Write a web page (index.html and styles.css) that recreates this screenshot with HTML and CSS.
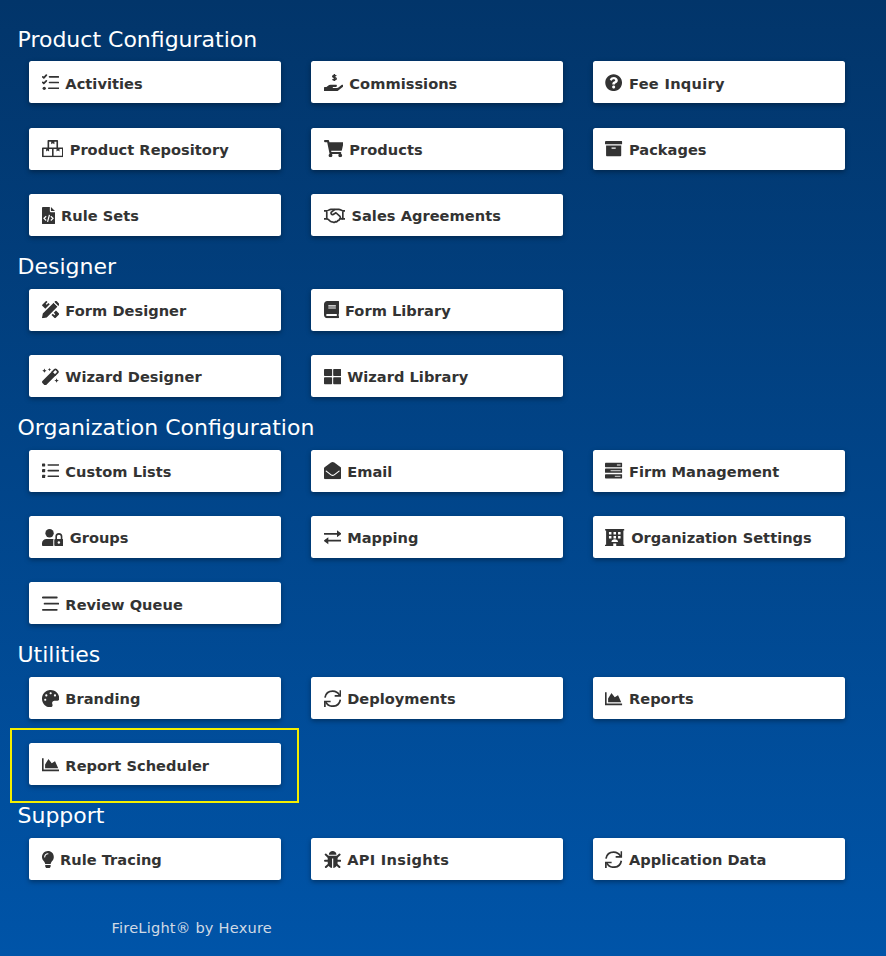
FILE: index.html
```html
<!DOCTYPE html>
<html lang="en">
<head>
<meta charset="utf-8">
<title>FireLight</title>
<link rel="stylesheet" href="styles.css">
</head>
<body>
<svg class="sprite" aria-hidden="true">
<symbol id="tasks" viewBox="0 0 512 512"><g fill="none" stroke="currentColor" stroke-width="52" stroke-linecap="round" stroke-linejoin="round"><path d="M24 84l30 30 74-78M24 250l30 30 74-78"/><path d="M222 84h264M222 252h264M200 422h286" stroke-width="48"/></g><circle cx="66" cy="424" r="48"/></symbol>
<symbol id="hand" viewBox="0 0 576 512"><path d="M565 329c-13-12-34-11-47 0l-92 74c-11 9-25 14-40 14H272c-9 0-16-7-16-16s7-16 16-16h78c16 0 31-11 33-27 3-20-12-37-31-37H192c-27 0-53 9-74 26l-46 38H16c-9 0-16 7-16 16v96c0 9 7 15 16 15h357c14 0 28-5 39-14l152-121c15-12 16-35 1-48z"/><path d="M362 62c-18-20-106-26-106 13 0 40 106 20 106 65 0 42-88 38-110 13M307 0v208" fill="none" stroke="currentColor" stroke-width="44"/></symbol>
<symbol id="question" viewBox="0 0 512 512"><path d="M504 256c0 136.997-111.043 248-248 248S8 392.997 8 256C8 119.083 119.043 8 256 8s248 111.083 248 248zM262.655 90c-54.497 0-89.255 22.957-116.549 63.758-3.536 5.286-2.353 12.415 2.715 16.258l34.699 26.31c5.205 3.947 12.621 3.008 16.665-2.122 17.864-22.658 30.113-35.797 57.303-35.797 20.429 0 45.698 13.148 45.698 32.958 0 14.976-12.363 22.667-32.534 33.976C247.128 238.528 216 254.941 216 296v4c0 6.627 5.373 12 12 12h56c6.627 0 12-5.373 12-12v-1.333c0-28.462 83.186-29.647 83.186-106.667 0-58.002-60.165-102-116.531-102zM256 338c-25.365 0-46 20.635-46 46 0 25.364 20.635 46 46 46s46-20.636 46-46c0-25.365-20.635-46-46-46z"/></symbol>
<symbol id="boxes" viewBox="0 0 640 512"><g fill="none" stroke="currentColor" stroke-width="48" stroke-linejoin="round"><path d="M188 24h264v220H188zM24 244h592v244H24zM320 244v244"/></g><path d="M272 24h96v100l-48-28-48 28zM122 244h88v98l-44-28-44 28zM430 244h88v98l-44-28-44 28z"/></symbol>
<symbol id="cart" viewBox="0 0 576 512"><path d="M528.12 301.319l47.273-208C578.806 78.301 567.391 64 551.99 64H159.208l-9.166-44.81C147.758 8.021 137.93 0 126.529 0H24C10.745 0 0 10.745 0 24v16c0 13.255 10.745 24 24 24h69.883l70.248 343.435C147.325 417.1 136 435.222 136 456c0 30.928 25.072 56 56 56s56-25.072 56-56c0-15.674-6.447-29.835-16.824-40h209.647C430.447 426.165 424 440.326 424 456c0 30.928 25.072 56 56 56s56-25.072 56-56c0-22.172-12.888-41.332-31.579-50.405l5.517-24.276c3.413-15.018-8.002-29.319-23.403-29.319H218.117l-6.545-32h293.145c11.206 0 20.92-7.754 23.403-18.681z"/></symbol>
<symbol id="archive" viewBox="0 0 512 512"><path d="M32 448c0 17.7 14.3 32 32 32h384c17.7 0 32-14.3 32-32V160H32v288zm160-212c0-6.6 5.4-12 12-12h104c6.6 0 12 5.4 12 12v8c0 6.6-5.4 12-12 12H204c-6.6 0-12-5.4-12-12v-8zM480 32H32C14.3 32 0 46.3 0 64v48c0 8.8 7.2 16 16 16h480c8.8 0 16-7.2 16-16V64c0-17.7-14.3-32-32-32z"/></symbol>
<symbol id="filecode" viewBox="0 0 384 512"><path d="M24 0h208v128c0 13 11 24 24 24h128v336c0 13-11 24-24 24H24c-13 0-24-11-24-24V24C0 11 11 0 24 0zM264 0l120 120H264z"/><path d="M124 274l-66 62 66 62M260 274l66 62-66 62M220 234l-56 208" fill="none" stroke="#fff" stroke-width="36"/></symbol>
<symbol id="handshake" viewBox="0 0 640 512"><g fill="none" stroke="currentColor" stroke-width="50" stroke-linejoin="round"><path d="M0 112h82c42 0 74-42 122-42h238c45 0 72 42 116 42h82M82 112v242H0M558 112v242h82"/><path d="M82 354c42 0 60 25 92 54 37 32 58 43 83 35 30 26 62 11 77-9 35 12 64-3 72-31 37 4 49-20 57-49h95M322 72l-112 86c-18 62 49 89 88 47l55-35 121 111c20 22 16 54-11 73"/></g></symbol>
<symbol id="tools" viewBox="0 0 512 512"><path d="M8 112L112 8c9-9 20-9 29 0l22 22-52 52 26 26 52-52 42 42L98 231 8 141c-9-9-9-20 0-29zM414 281l90 90c9 9 9 20 0 29L400 504c-9 9-20 9-29 0l-90-90 40-40 46 46 26-26-46-46zM0 498l24-127L346 49l117 117-322 322L14 512c-8 1-15-6-14-14zM385 11c15-15 39-15 53 0l63 63c15 15 15 39 0 53l-18 18L367 29z"/><path d="M336 39l137 137" stroke="#fff" stroke-width="22"/></symbol>
<symbol id="book" viewBox="0 0 448 512"><path d="M448 360V24c0-13.3-10.7-24-24-24H96C43 0 0 43 0 96v320c0 53 43 96 96 96h328c13.3 0 24-10.7 24-24v-16c0-7.5-3.5-14.3-8.9-18.7-4.2-15.4-4.2-59.3 0-74.7 5.4-4.3 8.9-11.1 8.9-18.6zM128 134c0-3.3 2.7-6 6-6h212c3.3 0 6 2.7 6 6v20c0 3.3-2.7 6-6 6H134c-3.3 0-6-2.7-6-6v-20zm0 64c0-3.3 2.7-6 6-6h212c3.3 0 6 2.7 6 6v20c0 3.3-2.7 6-6 6H134c-3.3 0-6-2.7-6-6v-20zm253.4 250H96c-17.7 0-32-14.3-32-32 0-17.6 14.4-32 32-32h285.4c-1.9 17.1-1.9 46.9 0 64z"/></symbol>
<symbol id="wand" viewBox="0 0 512 512"><path d="M12 387L300 99l113 113-288 288c-15 15-42 15-57 0l-56-56c-16-16-16-41 0-57zM72 16l20 44 44 20-44 20-20 44-20-44L8 80l44-20zM222 0l15 32 32 15-32 15-15 32-15-32-32-15 32-15zM432 304l20 48 48 20-48 20-20 48-20-48-48-20 48-20z"/><path d="M290 134l84-84c15-15 32-15 47 0l41 41c15 15 15 32 0 47l-84 84" fill="none" stroke="currentColor" stroke-width="48"/></symbol>
<symbol id="windows" viewBox="0 0 512 512"><rect y="32" width="240" height="208" rx="22"/><rect x="272" y="32" width="240" height="208" rx="22"/><rect y="272" width="240" height="208" rx="22"/><rect x="272" y="272" width="240" height="208" rx="22"/></symbol>
<symbol id="list" viewBox="0 0 512 512"><rect y="42" width="94" height="94" rx="14"/><rect y="209" width="94" height="94" rx="14"/><rect y="376" width="94" height="94" rx="14"/><path d="M184 88h304M184 256h304M184 424h304" stroke="currentColor" stroke-width="46" stroke-linecap="round"/></symbol>
<symbol id="envelope" viewBox="0 0 512 512"><path d="M0 190c0-16 6-28 18-38L207 18c30-24 68-24 98 0l189 134c12 10 18 22 18 38v274c0 27-21 48-48 48H48c-27 0-48-21-48-48z"/><path d="M66 270l144 110c28 21 64 21 92 0l144-110" fill="none" stroke="#fff" stroke-width="34" stroke-linecap="round"/></symbol>
<symbol id="server" viewBox="0 0 512 512"><rect y="24" width="512" height="128" rx="20"/><rect y="192" width="512" height="128" rx="20"/><rect y="360" width="512" height="128" rx="20"/><path d="M352 88h110M165 256h300M290 424h170" stroke="#b8b8b8" stroke-width="40"/></symbol>
<symbol id="userlock" viewBox="0 0 640 512"><circle cx="224" cy="124" r="124"/><path d="M0 468v-44c0-74 60-128 134-128h180c12 0 22 2 32 5-8 10-12 22-12 37v174H44c-27 0-44-17-44-44zM398 296h200c24 0 42 18 42 42v132c0 24-18 42-42 42H406c-24 0-42-18-42-42V338c0-24 10-42 34-42z"/><path d="M420 300v-76c0-108 160-108 160 0v76" fill="none" stroke="currentColor" stroke-width="48"/><circle cx="500" cy="402" r="36" fill="#fff"/></symbol>
<symbol id="exchange" viewBox="0 0 512 512"><path d="M12 142h448M52 346h448" stroke="currentColor" stroke-width="50" stroke-linecap="round"/><path d="M384 38l122 90c8 8 8 20 0 28l-122 90zM128 242L6 332c-8 8-8 20 0 28l122 90z"/></symbol>
<symbol id="building" viewBox="0 0 576 512"><path fill-rule="evenodd" d="M16 0h544c9 0 16 7 16 16v32h-32v416h32v48H0v-48h32V48H0V16C0 7 7 0 16 0zM116 90v74h74V90zm135 0v74h74V90zm135 0v74h74V90zM116 205v74h74v-74zm135 0v74h74v-74zm135 0v74h74v-74zM190 384h196c0-106-196-106-196 0zM244 430v82h88v-82z"/></symbol>
<symbol id="stream" viewBox="0 0 512 512"><path d="M24 74h414M76 256h412M24 438h414" stroke="currentColor" stroke-width="52" stroke-linecap="round"/></symbol>
<symbol id="palette" viewBox="0 0 512 512"><path d="M204.3 5C104.9 24.4 24.8 104.3 5.2 203.4c-37 187 131.7 326.4 258.8 306.7 41.2-6.4 61.4-54.6 42.5-91.7-23.1-45.4 9.9-98.4 60.9-98.4h79.7c35.8 0 64.8-29.6 64.9-65.3C511.5 97.1 368.1-26.9 204.3 5zM96 320c-17.7 0-32-14.3-32-32s14.3-32 32-32 32 14.3 32 32-14.3 32-32 32zm32-128c-17.7 0-32-14.3-32-32s14.3-32 32-32 32 14.3 32 32-14.3 32-32 32zm128-64c-17.7 0-32-14.3-32-32s14.3-32 32-32 32 14.3 32 32-14.3 32-32 32zm128 64c-17.7 0-32-14.3-32-32s14.3-32 32-32 32 14.3 32 32-14.3 32-32 32z"/></symbol>
<symbol id="sync" viewBox="0 0 512 512"><g fill="none" stroke="currentColor" stroke-width="50"><path d="M28 224C50 104 144 32 256 32c86 0 162 44 204 122M484 288c-22 120-116 192-228 192-86 0-162-44-204-122"/><path d="M486 8v164H316M26 504V340h170"/></g></symbol>
<symbol id="chart" viewBox="0 0 512 512"><path d="M24 64v360h488" fill="none" stroke="currentColor" stroke-width="48"/><path d="M372.7 159.5L288 216l-85.3-113.7c-5.1-6.8-15.5-6.3-19.9 1L92 248v112h388l-89.9-195.8c-3.2-6.5-11.4-8.7-17.4-4.7z"/></symbol>
<symbol id="bulb" viewBox="0 0 352 512"><path d="M96.06 454.35c.01 6.29 1.87 12.45 5.36 17.69l17.09 25.69a31.99 31.99 0 0 0 26.64 14.28h61.71a31.99 31.99 0 0 0 26.64-14.28l17.09-25.69a31.989 31.989 0 0 0 5.36-17.69l.04-38.35H96.01l.05 38.35zM0 176c0 44.37 16.45 84.85 43.56 115.78 16.52 18.85 42.36 58.23 52.21 91.45.04.26.07.52.11.78h160.24c.04-.26.07-.51.11-.78 9.85-33.22 35.69-72.6 52.21-91.45C335.55 260.85 352 220.37 352 176 352 78.61 272.91-.3 175.45 0 73.44.31 0 82.97 0 176zm176-80c-44.11 0-80 35.89-80 80 0 8.84-7.16 16-16 16s-16-7.16-16-16c0-61.76 50.24-112 112-112 8.84 0 16 7.16 16 16s-7.16 16-16 16z"/></symbol>
<symbol id="bug" viewBox="0 0 512 512"><path d="M144 112C144-37 368-37 368 112zM110 144h292v208c0 75-54 138-128 150V224h-36v278c-74-12-128-75-128-150z"/><path d="M50 106l86 76M462 106l-86 76M30 288h90M392 288h90M56 476l84-78M456 476l-84-78" fill="none" stroke="currentColor" stroke-width="60" stroke-linecap="round"/></symbol>
</svg>

<main class="menu">
<section><h2>Product Configuration</h2><div class="grid">
<a class="card"><svg class="icon"><use href="#tasks"/></svg><span>Activities</span></a>
<a class="card"><svg class="icon w576"><use href="#hand"/></svg><span>Commissions</span></a>
<a class="card"><svg class="icon"><use href="#question"/></svg><span class="loose">Fee Inquiry</span></a>
<a class="card"><svg class="icon w640"><use href="#boxes"/></svg><span>Product Repository</span></a>
<a class="card"><svg class="icon w576"><use href="#cart"/></svg><span>Products</span></a>
<a class="card"><svg class="icon"><use href="#archive"/></svg><span>Packages</span></a>
<a class="card"><svg class="icon w384"><use href="#filecode"/></svg><span>Rule Sets</span></a>
<a class="card"><svg class="icon w640"><use href="#handshake"/></svg><span>Sales Agreements</span></a>
</div></section>
<section><h2>Designer</h2><div class="grid two">
<a class="card"><svg class="icon"><use href="#tools"/></svg><span>Form Designer</span></a>
<a class="card"><svg class="icon w448"><use href="#book"/></svg><span>Form Library</span></a>
<a class="card"><svg class="icon"><use href="#wand"/></svg><span>Wizard Designer</span></a>
<a class="card"><svg class="icon"><use href="#windows"/></svg><span>Wizard Library</span></a>
</div></section>
<section><h2>Organization Configuration</h2><div class="grid">
<a class="card"><svg class="icon"><use href="#list"/></svg><span>Custom Lists</span></a>
<a class="card"><svg class="icon"><use href="#envelope"/></svg><span>Email</span></a>
<a class="card"><svg class="icon"><use href="#server"/></svg><span>Firm Management</span></a>
<a class="card"><svg class="icon w640"><use href="#userlock"/></svg><span>Groups</span></a>
<a class="card"><svg class="icon"><use href="#exchange"/></svg><span>Mapping</span></a>
<a class="card"><svg class="icon w576"><use href="#building"/></svg><span>Organization Settings</span></a>
<a class="card"><svg class="icon"><use href="#stream"/></svg><span>Review Queue</span></a>
</div></section>
<section><h2>Utilities</h2><div class="grid">
<a class="card"><svg class="icon"><use href="#palette"/></svg><span>Branding</span></a>
<a class="card"><svg class="icon"><use href="#sync"/></svg><span>Deployments</span></a>
<a class="card"><svg class="icon"><use href="#chart"/></svg><span>Reports</span></a>
<a class="card highlighted"><svg class="icon"><use href="#chart"/></svg><span>Report Scheduler</span></a>
</div></section>
<section><h2>Support</h2><div class="grid">
<a class="card"><svg class="icon w352"><use href="#bulb"/></svg><span>Rule Tracing</span></a>
<a class="card"><svg class="icon"><use href="#bug"/></svg><span class="loose">API Insights</span></a>
<a class="card"><svg class="icon"><use href="#sync"/></svg><span>Application Data</span></a>
</div></section>
</main>
<footer>FireLight® by Hexure</footer>
</body>
</html>
```

FILE: styles.css
```css
* { box-sizing: border-box; }
html { height: 100%; }
body {
  margin: 0;
  height: 956px;
  overflow: hidden;
  font-family: Verdana, "DejaVu Sans", sans-serif;
  background: linear-gradient(#02356a, #0054a8);
}
.sprite { display: none; }
.menu { padding: 32.9px 0 0 17.5px; }
h2 {
  margin: 0;
  height: 28.4px;
  font-size: 22px;
  font-weight: 400;
  line-height: 14px;
  color: #fff;
}
.grid {
  display: grid;
  grid-template-columns: repeat(3, 252.3px);
  grid-auto-rows: 42px;
  gap: 24.3px 29.5px;
  padding: 0 0 24.3px 11.7px;
}
.grid.two { grid-template-columns: repeat(2, 252.3px); }
.card {
  position: relative;
  display: flex;
  align-items: center;
  gap: 6.2px;
  padding-left: 12.7px;
  border-radius: 2.5px;
  background: #fff;
  box-shadow: 0 2px 5px rgba(0, 0, 0, .35);
  color: #333;
  font-size: 14.6px;
  font-weight: 700;
  letter-spacing: .03px;
  white-space: nowrap;
}
.card span { padding-top: 2px; }
.card .loose { letter-spacing: .3px; }
.icon { width: 17.3px; height: 17.3px; margin-top: 1px; fill: currentColor; flex: none; }
.w576 { width: 19.5px; }
.w640 { width: 21.6px; }
.w448 { width: 15.1px; }
.w384 { width: 13px; }
.w352 { width: 11.9px; }
.highlighted::after {
  content: "";
  position: absolute;
  inset: -15.5px -17.3px -17.5px -19.2px;
  border: 2px solid #f4ee00;
}
footer {
  padding: 14px 0 0 111.5px;
  font-size: 14.6px;
  line-height: 20px;
  letter-spacing: .2px;
  color: #d0dae5;
}
```
